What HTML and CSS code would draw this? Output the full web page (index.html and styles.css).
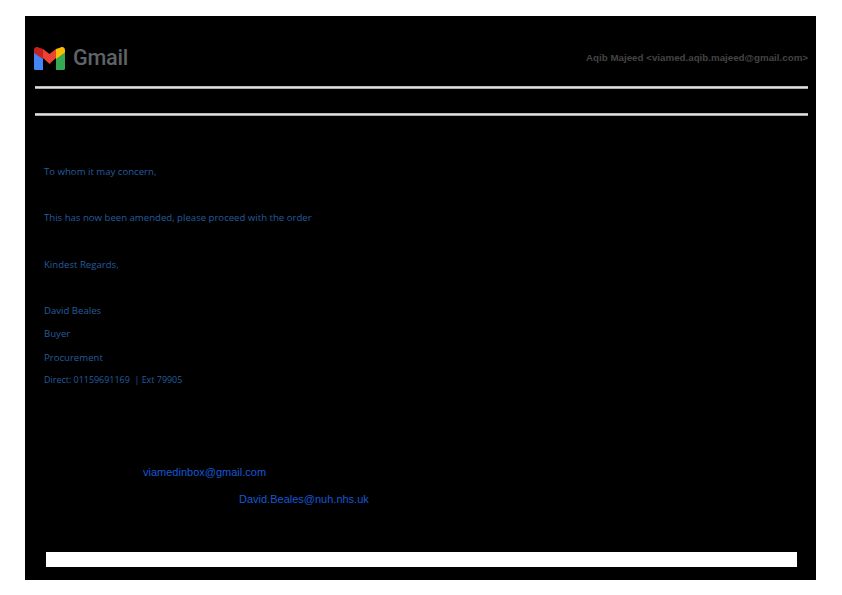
FILE: index.html
```html
<!DOCTYPE html>
<html lang="en">
<head>
<meta charset="utf-8">
<title>Gmail</title>
<link rel="stylesheet" href="styles.css">
</head>
<body>
<main class="sheet">
  <header class="top">
    <div class="brand">
      <svg class="logo" viewBox="0 0 31 23" width="31" height="23" aria-hidden="true">
        <path fill="#4285f4" d="M0 5v16.500A1.500 1.500 0 0 0 1.500 23H9V11z"/>
        <path fill="#34a853" d="M22 11v12h7.500a1.500 1.500 0 0 0 1.500-1.500V5z"/>
        <path fill="#fbbc04" d="M22 2v10l9-6.500V3C31 .5 28.500-.5 26.500.5z"/>
        <path fill="#ea4335" d="M9 11V2l6.500 5L22 2v9l-6.500 6z"/>
        <path fill="#c5221f" d="M0 3v3l9 6V2L4.500.5C2.500-.5 0 .5 0 3z"/>
      </svg>
      <span class="wordmark">Gmail</span>
    </div>
    <div class="account">Aqib Majeed &lt;viamed.aqib.majeed@gmail.com&gt;</div>
  </header>
  <div class="rule rule-first"></div>
  <div class="rule rule-second"></div>
  <section class="message">
    <p class="line gap-first">To whom it may concern,</p>
    <p class="line gap-para">This has now been amended, please proceed with the order</p>
    <p class="line gap-para-wide">Kindest Regards,</p>
    <p class="line gap-para">David Beales</p>
    <p class="line gap-sig">Buyer</p>
    <p class="line gap-sig-wide">Procurement</p>
    <p class="line gap-sig-narrow small">Direct: 01159691169&nbsp; | Ext 79905</p>
  </section>
  <section class="addresses">
    <a class="addr addr-one">viamedinbox@gmail.com</a>
    <a class="addr addr-two">David.Beales@nuh.nhs.uk</a>
  </section>
  <div class="whitebar"></div>
</main>
</body>
</html>
```

FILE: styles.css
```css
html, body {
  margin: 0;
  padding: 0;
  background: #fff;
}
body {
  width: 842px;
  height: 595px;
  overflow: hidden;
  padding: 16px 26px 15px 25px;
  box-sizing: border-box;
}
.sheet {
  height: 564px;
  background: #000;
  display: flex;
  flex-direction: column;
  box-sizing: border-box;
  padding: 0 8px 13px 10px;
}
.top {
  height: 70px;
  flex: none;
  display: flex;
  align-items: center;
  justify-content: space-between;
  padding-top: 14px;
  box-sizing: border-box;
}
.brand {
  display: flex;
  align-items: center;
  gap: 8px;
  margin-left: -1px;
}
.logo { display: block; }
.wordmark {
  font: 500 21.600px/24px "Roboto", "Liberation Sans", sans-serif;
  color: #5f6368;
  letter-spacing: -0.2px;
}
.account {
  font: bold 9.750px/12px "Liberation Sans", sans-serif;
  color: #444;
}
.rule {
  height: 3px;
  flex: none;
  background: linear-gradient(#a8a8a8, #e0e0e0 50%, #8c8c8c);
}
.rule-second { margin-top: 24px; }
.message {
  flex: none;
  padding-left: 9px;
}
.line {
  margin: 0;
  font: 9.600px/12px "Open Sans", sans-serif;
  color: #245c9e;
}
.gap-first { margin-top: 50px; }
.gap-para { margin-top: 34px; }
.gap-para-wide { margin-top: 35px; }
.gap-sig { margin-top: 11px; }
.gap-sig-wide { margin-top: 12px; }
.gap-sig-narrow { margin-top: 10px; }
.small { font-size: 8.950px; }
.addresses {
  flex: none;
  display: flex;
  flex-direction: column;
  margin-top: 79px;
  gap: 13px;
}
.addr {
  font: 11px/14px "Liberation Sans", sans-serif;
  color: #1558d6;
}
.addr-one { margin-left: 108px; }
.addr-two { margin-left: 204px; }
.whitebar {
  margin: auto 11px 0 11px;
  height: 15px;
  flex: none;
  background: #fff;
}
```
